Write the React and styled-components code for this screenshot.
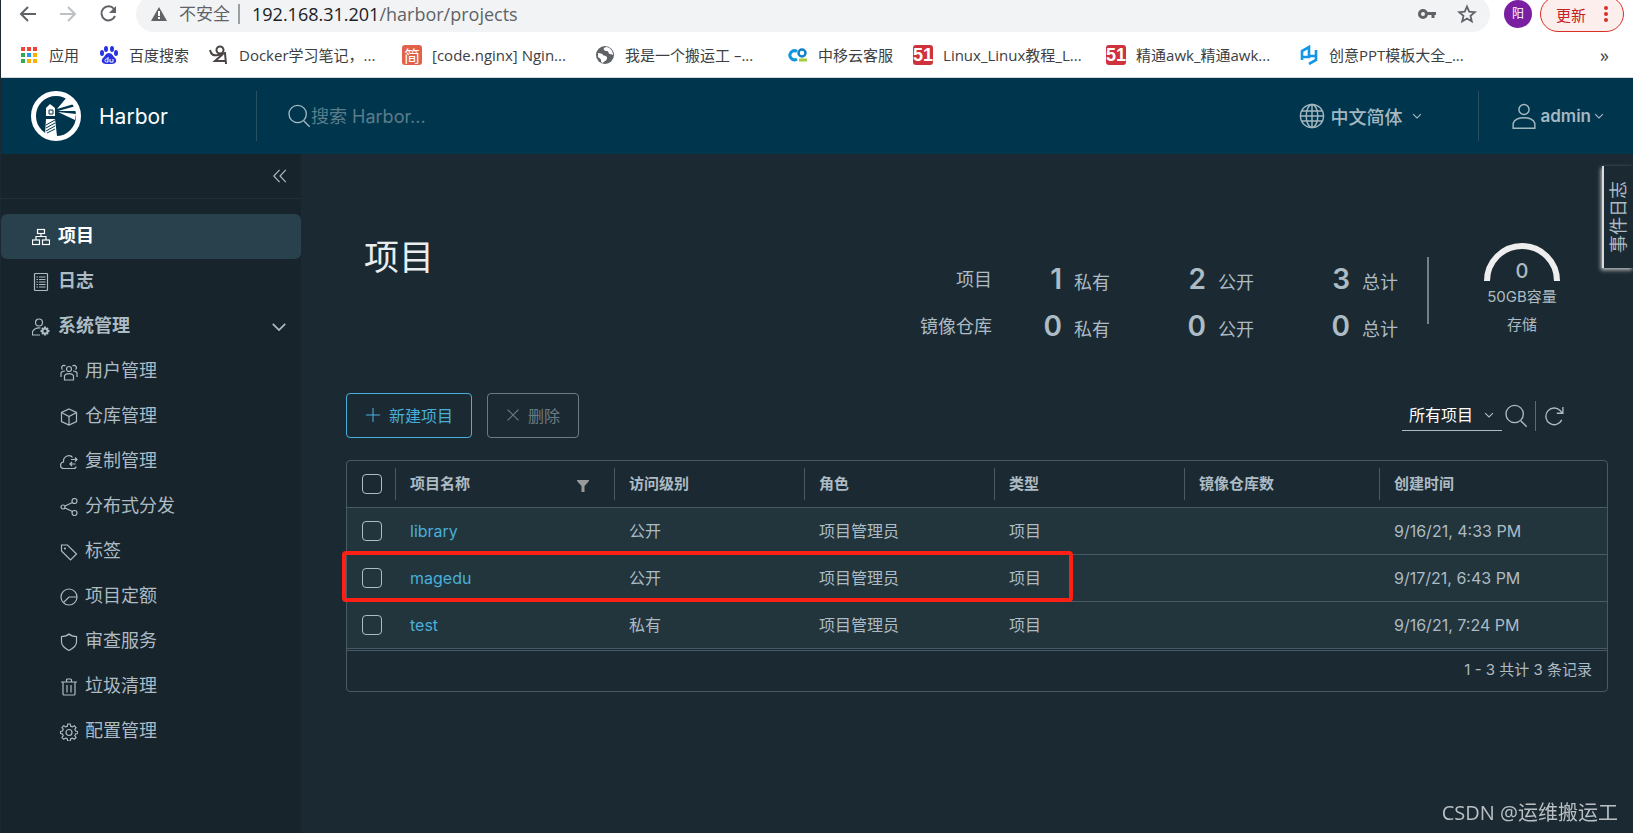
import React, { useState } from 'react';
import styled, { createGlobalStyle } from 'styled-components';

const navItems = [
  { icon: 'users', label: '用户管理' },
  { icon: 'cube', label: '仓库管理' },
  { icon: 'cloud', label: '复制管理' },
  { icon: 'share', label: '分布式分发' },
  { icon: 'tag', label: '标签' },
  { icon: 'pie', label: '项目定额' },
  { icon: 'shield', label: '审查服务' },
  { icon: 'trash', label: '垃圾清理' },
  { icon: 'cog', label: '配置管理' }
];

const bookmarks = [
  { icon: 'apps', label: '应用' },
  { icon: 'baidu', label: '百度搜索' },
  { icon: 'figure', label: 'Docker学习笔记，...', wide: true },
  { icon: 'jian', label: '[code.nginx] Ngin...', wide: true },
  { icon: 'globe', label: '我是一个搬运工 –...', wide: true },
  { icon: 'co', label: '中移云客服' },
  { icon: 'five', label: 'Linux_Linux教程_L...', wide: true },
  { icon: 'five', label: '精通awk_精通awk...', wide: true },
  { icon: 'ppt', label: '创意PPT模板大全_...', wide: true }
];

const stats = [
  { label: '项目', values: [1, 2, 3] },
  { label: '镜像仓库', values: [0, 0, 0] }
];
const statNames = ['私有', '公开', '总计'];

const projects = [
  { name: 'library', access: '公开', role: '项目管理员', type: '项目', created: '9/16/21, 4:33 PM' },
  { name: 'magedu', access: '公开', role: '项目管理员', type: '项目', created: '9/17/21, 6:43 PM' },
  { name: 'test', access: '私有', role: '项目管理员', type: '项目', created: '9/16/21, 7:24 PM' }
];

const gearPath =
  'M15.5 2h5l1 4.4 3.2 1.4 3.9-2.4 3.5 3.6-2.4 3.8 1.4 3.2 4.4 1v4l-4.4 1-1.4 3.2 2.4 3.9-3.6 3.5-3.8-2.4-3.2 1.4-1 4.4h-5l-1-4.4-3.2-1.4-3.8 2.4-3.5-3.5 2.4-3.9L5 22l-4-1v-4l4-1 1.4-3.2L4 9l3.5-3.6 3.8 2.4 3.2-1.4z';

// line icons on a 36 unit grid
const lineIcons = {
  org: (
    <>
      <rect x="11" y="3" width="14" height="8" />
      <rect x="1" y="24" width="14" height="9" />
      <rect x="21" y="24" width="14" height="9" />
      <path d="M18 11v6M8 24v-7h20v7" />
    </>
  ),
  log: (
    <>
      <rect x="5" y="1" width="26" height="34" rx="2" />
      <path d="M9 8h3M14 8h13M9 13h3M14 13h13M9 18h3M14 18h13M9 23h3M14 23h13M9 28h3M14 28h13" />
    </>
  ),
  admin: (
    <>
      <circle cx="14" cy="9" r="7" />
      <path d="M16 34H1v-7c4-6 9-8 16-7" />
      <circle cx="26" cy="26" r="5" strokeWidth="4" />
      <path d="M26 17v3M26 32v3M17 26h3M32 26h3M20 20l2 2M30 30l2 2M32 20l-2 2M22 30l-2 2" strokeWidth="4" />
    </>
  ),
  users: (
    <>
      <circle cx="18" cy="12" r="5" />
      <path d="M9 34V25c3-5 15-5 18 0v9zM5 13a4.5 4.5 0 1 1 6-7M31 13a4.5 4.5 0 1 0-6-7M2 28v-8c1-3 4-4 8-4M34 28v-8c-1-3-4-4-8-4" />
    </>
  ),
  cube: <path d="M18 2l15 7v18l-15 7-15-7V9zM3 9l15 8 15-8M18 17v17" />,
  cloud: (
    <path d="M32 27c0 3-2 4-5 4H8c-9 0-9-12-1-13C6 5 21 2 25 9M22 13h12M30 9l4 4-4 4M31 22H20M24 18l-4 4 4 4" />
  ),
  share: (
    <>
      <circle cx="6" cy="18" r="4" />
      <circle cx="29" cy="6" r="5" />
      <circle cx="29" cy="30" r="5" />
      <path d="M10 16l15-7M10 20l15 7" />
    </>
  ),
  tag: (
    <>
      <path d="M3 4h12l18 18-12 12L3 16z" />
      <circle cx="10" cy="11" r="1" />
    </>
  ),
  pie: (
    <>
      <circle cx="18" cy="18" r="16" />
      <path d="M34 18H18L7 29" />
    </>
  ),
  shield: <path d="M18 2c4 4 9 5 15 5v11c0 8-7 13-15 17C10 31 3 26 3 18V7c6 0 11-1 15-5z" />,
  trash: (
    <>
      <path d="M2 8h32M6 8v24q0 2 2 2h20q2 0 2-2V8M13 8V4q0-2 2-2h6q2 0 2 2v4M14 14v15M22 14v15" />
    </>
  ),
  cog: (
    <>
      <path d={gearPath} />
      <circle cx="18" cy="19" r="6" />
    </>
  ),
  search: (
    <>
      <circle cx="16" cy="15" r="13" />
      <path d="M25 25l9 9" />
    </>
  ),
  world: (
    <>
      <circle cx="18" cy="18" r="16" />
      <ellipse cx="18" cy="18" rx="8" ry="16" />
      <path d="M18 2v32M4 11h28M2 18h32M4 25h28" />
    </>
  ),
  user: (
    <>
      <circle cx="18" cy="9" r="7" />
      <path d="M3 35V28c4-10 26-10 30 0v7z" />
    </>
  ),
  down: <path d="M4 11l14 14 14-14" />,
  collapse: <path d="M17 2L2 18l15 16M33 2L18 18l15 16" />,
  plus: <path d="M18 2v32M2 18h32" />,
  close: <path d="M4 4l28 28M32 4L4 32" />,
  refresh: <path d="M32 25A15 15 0 1 1 29 8l4 5M34 2v11H23" />
};

function LineIcon({ name, size = 18, weight = 2.4 }) {
  return (
    <Svg width={size} height={size} viewBox="0 0 36 36" fill="none" stroke="currentColor" strokeWidth={weight} aria-hidden="true">
      {lineIcons[name]}
    </Svg>
  );
}

function BookmarkIcon({ name }) {
  if (name === 'jian') return <Badge $bg="#e2614b" $size={16}>简</Badge>;
  if (name === 'five') return <Badge $bg="#cf313d" $size={18} $bold>51</Badge>;
  return (
    <Svg width="20" height="20" viewBox="0 0 20 20" aria-hidden="true">
      {name === 'apps' &&
        ['#f44336', '#f44336', '#f44336', '#34a853', '#2196f3', '#fbb000', '#34a853', '#fbb000', '#fbb000'].map((c, i) => (
          <rect key={i} x={2 + (i % 3) * 6} y={2 + Math.floor(i / 3) * 6} width="4" height="4" fill={c} />
        ))}
      {name === 'baidu' && (
        <g fill="#2932e1">
          <ellipse cx="7" cy="4" rx="2" ry="3" />
          <ellipse cx="13" cy="4" rx="2" ry="3" />
          <ellipse cx="3" cy="8" rx="2" ry="3" />
          <ellipse cx="17" cy="8" rx="2" ry="3" />
          <path d="M10 8c3 0 4 3 6 5 3 3 0 6-3 6H7c-3 0-6-3-3-6 2-2 3-5 6-5z" />
          <path d="M9 12v5H7.5q-1.5 0-1.5-1.5T7.5 14H9M11 14v3h3v-3" fill="none" stroke="#fff" />
        </g>
      )}
      {name === 'figure' && (
        <g fill="none" stroke="#4a4543" strokeWidth="2">
          <circle cx="11" cy="5" r="3.5" />
          <path d="M1 5c1 5 4 6 8 5l7-2 1 11M17 16H6l8-7" />
        </g>
      )}
      {name === 'globe' && (
        <g>
          <circle cx="10" cy="10" r="9" fill="#5f6368" />
          <path d="M3 8c3 0 5 1 5 2s4 0 4 3-3 3-4 5l-2-1c1-3-2-4-3-5zM9 3c-1 3 1 3 3 3s1 3 3 3 2 1 3 1c0-4-3-8-7-8z" fill="#fff" />
        </g>
      )}
      {name === 'co' && (
        <g fill="none">
          <path d="M9 6.5A4.5 4.5 0 1 0 9 14" stroke="#1296db" strokeWidth="3" />
          <circle cx="14" cy="8" r="3.5" stroke="#1480c8" strokeWidth="2.5" />
          <path d="M11 15h8" stroke="#a4ce39" strokeWidth="3" />
        </g>
      )}
      {name === 'ppt' && (
        <path d="M3 15V6l7-4v10H3M10 11h7M17 5v10l-7 4" fill="none" stroke="#1296e6" strokeWidth="2.6" />
      )}
    </Svg>
  );
}

function BrowserBar() {
  return (
    <Browser>
      <Toolbar>
        <ToolButton aria-label="后退">
          <Svg width="20" height="20" viewBox="0 0 20 20" fill="none" stroke="#5f6368" strokeWidth="2">
            <path d="M18 10H4M10 3l-7 7 7 7" />
          </Svg>
        </ToolButton>
        <ToolButton aria-label="前进">
          <Svg width="20" height="20" viewBox="0 0 20 20" fill="none" stroke="#bdc1c6" strokeWidth="2">
            <path d="M2 10h14M10 3l7 7-7 7" />
          </Svg>
        </ToolButton>
        <ToolButton aria-label="重新加载">
          <Svg width="20" height="20" viewBox="0 0 20 20" fill="none" stroke="#5f6368" strokeWidth="2">
            <path d="M16 5a7 7 0 1 0 1 7" />
            <path d="M18 2v7h-7z" fill="#5f6368" stroke="none" />
          </Svg>
        </ToolButton>
        <Omnibox>
          <Svg width="16" height="16" viewBox="0 0 16 16">
            <path d="M8 1l8 14H0z" fill="#5f6368" />
            <path d="M8 5v5M8 11v2" stroke="#fff" strokeWidth="2" />
          </Svg>
          <Unsafe>不安全</Unsafe>
          <Address>
            <b>192.168.31.201</b>/harbor/projects
          </Address>
          <Svg width="20" height="20" viewBox="0 0 20 20" fill="none" stroke="#5f6368" strokeWidth="3">
            <circle cx="6" cy="10" r="3.5" />
            <path d="M9 9.5h10M16 10v4" />
          </Svg>
          <Svg width="20" height="20" viewBox="0 0 20 20" fill="none" stroke="#5f6368" strokeWidth="1.8">
            <path d="M10 2.500l2.200 5.200 5.600.500-4.300 3.700 1.300 5.500-4.800-2.900-4.800 2.900 1.300-5.500L2.200 8.200l5.600-.500z" />
          </Svg>
        </Omnibox>
        <Avatar>阳</Avatar>
        <UpdateButton>
          更新
          <Svg width="4" height="18" viewBox="0 0 4 18" fill="#d93025">
            <circle cx="2" cy="3" r="2" />
            <circle cx="2" cy="9" r="2" />
            <circle cx="2" cy="15" r="2" />
          </Svg>
        </UpdateButton>
      </Toolbar>
      <Bookmarks>
        {bookmarks.map((item) => (
          <Bookmark key={item.label} href="#" $wide={item.wide}>
            <BookmarkIcon name={item.icon} />
            {item.label}
          </Bookmark>
        ))}
        <More aria-label="更多书签">»</More>
      </Bookmarks>
    </Browser>
  );
}

function HarborHeader() {
  return (
    <Header>
      <Brand href="#">
        <Svg width="50" height="50" viewBox="0 0 50 50">
          <circle cx="25" cy="25" r="22.5" fill="none" stroke="#fff" strokeWidth="5" />
          <path d="M19 13l5 4v8h-9v-8zM15 28h9l2 17-6 3-6-4z" fill="#fff" />
          <path d="M18 19h4v4h-4zM15 34l9-5M15 37l9-5M15 40l9-5M16 42l8-4" fill="none" stroke="#00364d" />
          <path d="M26 18l10-12 7 7zM27 20l18-5 1 5zM27 21l18 2-1 6z" fill="#fff" />
        </Svg>
        Harbor
      </Brand>
      <Search>
        <LineIcon name="search" size={24} weight={2} />
        <SearchInput type="search" placeholder="搜索 Harbor..." aria-label="搜索 Harbor" />
      </Search>
      <HeaderButton>
        <LineIcon name="world" size={26} weight={2} />
        中文简体
        <Caret>
          <LineIcon name="down" size={10} weight={4} />
        </Caret>
      </HeaderButton>
      <UserButton>
        <LineIcon name="user" size={26} weight={2} />
        admin
        <LineIcon name="down" size={10} weight={4} />
      </UserButton>
    </Header>
  );
}

function Sidebar() {
  const [open, setOpen] = useState(true);

  return (
    <Side>
      <CollapseRow>
        <PlainButton aria-label="收起">
          <LineIcon name="collapse" size={14} weight={3} />
        </PlainButton>
      </CollapseRow>
      <NavLink href="#" $active>
        <LineIcon name="org" />
        项目
      </NavLink>
      <NavLink href="#">
        <LineIcon name="log" />
        日志
      </NavLink>
      <NavGroup onClick={() => setOpen(!open)} aria-expanded={open}>
        <LineIcon name="admin" />
        系统管理
        <GroupCaret>
          <LineIcon name="down" size={16} weight={4} />
        </GroupCaret>
      </NavGroup>
      {open &&
        navItems.map((item) => (
          <SubLink key={item.label} href="#">
            <LineIcon name={item.icon} />
            {item.label}
          </SubLink>
        ))}
    </Side>
  );
}

function Summary() {
  return (
    <Head>
      <PageName>项目</PageName>
      <StatGrid>
        {stats.map((row) => (
          <React.Fragment key={row.label}>
            <StatCell>{row.label}</StatCell>
            {row.values.map((value, i) => (
              <StatCell key={statNames[i]}>
                <StatNumber>{value}</StatNumber>
                {statNames[i]}
              </StatCell>
            ))}
          </React.Fragment>
        ))}
      </StatGrid>
      <Divider />
      <Storage>
        <Gauge>
          <Svg width="76" height="38" viewBox="0 0 76 38">
            <path d="M3 38a35 35 0 0 1 70 0" fill="none" stroke="#eee" strokeWidth="6" />
          </Svg>
          <GaugeValue>0</GaugeValue>
        </Gauge>
        <span>50GB容量</span>
        <span>存储</span>
      </Storage>
    </Head>
  );
}

function ProjectTable() {
  return (
    <Grid>
      <Table>
        <colgroup>
          <Col $w={48} />
          <Col $w={219} />
          <Col $w={190} />
          <Col $w={190} />
          <Col $w={190} />
          <Col $w={195} />
          <col />
        </colgroup>
        <thead>
          <tr>
            <Th>
              <Checkbox type="checkbox" aria-label="全选" />
            </Th>
            <Th>
              <HeadCell>
                项目名称
                <FilterButton aria-label="过滤">
                  <Svg width="12" height="12" viewBox="0 0 12 12">
                    <path d="M0 0h12v1L7.5 6v6h-3V6L0 1z" fill="#9a9a9a" />
                  </Svg>
                </FilterButton>
              </HeadCell>
            </Th>
            {['访问级别', '角色', '类型', '镜像仓库数', '创建时间'].map((name) => (
              <Th key={name}>
                <HeadCell>{name}</HeadCell>
              </Th>
            ))}
          </tr>
        </thead>
        <tbody>
          {projects.map((p) => (
            <tr key={p.name}>
              <Td>
                <Checkbox type="checkbox" aria-label={p.name} />
              </Td>
              <Td>
                <ProjectLink href="#">{p.name}</ProjectLink>
              </Td>
              <Td>{p.access}</Td>
              <Td>{p.role}</Td>
              <Td>{p.type}</Td>
              <Td />
              <Td>{p.created}</Td>
            </tr>
          ))}
        </tbody>
      </Table>
      <GridFooter>1 - 3 共计 3 条记录</GridFooter>
      <Highlight />
    </Grid>
  );
}

function App() {
  return (
    <Page>
      <GlobalStyle />
      <BrowserBar />
      <HarborHeader />
      <Body>
        <Sidebar />
        <Main>
          <Summary />
          <Actions>
            <ActionButton>
              <LineIcon name="plus" size={16} />
              新建项目
            </ActionButton>
            <ActionButton disabled>
              <LineIcon name="close" size={14} weight={3} />
              删除
            </ActionButton>
            <Filters>
              <SelectBox>
                <Select aria-label="项目类型" defaultValue="all">
                  <option value="all">所有项目</option>
                </Select>
                <LineIcon name="down" size={10} weight={4} />
              </SelectBox>
              <PlainButton aria-label="搜索">
                <LineIcon name="search" size={24} weight={2} />
              </PlainButton>
              <RefreshButton aria-label="刷新">
                <LineIcon name="refresh" size={20} />
              </RefreshButton>
            </Filters>
          </Actions>
          <ProjectTable />
          <EventTab>事件日志</EventTab>
        </Main>
      </Body>
      <Watermark>CSDN @运维搬运工</Watermark>
    </Page>
  );
}

export default App;

const GlobalStyle = createGlobalStyle`
  * {
    box-sizing: border-box;
  }
  body {
    margin: 0;
    background-color: #1b2a32;
  }
  button, input, select {
    font: inherit;
    color: inherit;
  }
`;

const Svg = styled.svg`
  display: block;
  flex: none;
`;

const Page = styled.div`
  display: flex;
  flex-direction: column;
  min-height: 100vh;
  border-left: 1px solid #1b2a32;
  font-family: Inter, 'Noto Sans CJK SC', sans-serif;
  font-size: 16px;
  color: #adbbc4;
`;

const Browser = styled.div`
  background-color: #ffffff;
  border-bottom: 1px solid #d5d9dd;
  font-family: 'Open Sans', 'Noto Sans CJK SC', sans-serif;
  color: #3c4043;
`;

const Toolbar = styled.div`
  display: flex;
  align-items: flex-end;
  height: 32px;
  padding: 0 9px 0 17px;
  overflow: hidden;
`;

const PlainButton = styled.button`
  display: flex;
  align-items: center;
  padding: 0;
  border: none;
  background: none;
  cursor: pointer;
`;

const ToolButton = styled(PlainButton)`
  width: 20px;
  height: 36px;
  margin-right: 20px;
`;

const Omnibox = styled.div`
  flex: 1;
  display: flex;
  align-items: center;
  height: 36px;
  margin-left: -2px;
  padding: 0 13px 0 15px;
  border-radius: 18px;
  background-color: #f1f3f4;
  font-size: 18px;
  line-height: 20px;
  color: #5f6368;

  svg:last-child {
    margin-left: 20px;
  }
`;

const Unsafe = styled.span`
  margin-left: 12px;
  padding-right: 8px;
  border-right: 2px solid #9aa0a6;
  font-size: 17px;
`;

const Address = styled.span`
  flex: 1;
  margin-left: 12px;

  b {
    font-weight: 400;
    color: #202124;
  }
`;

const Avatar = styled.span`
  width: 28px;
  height: 28px;
  margin: 0 8px 4px 14px;
  border-radius: 50%;
  background-color: #7b1fa2;
  color: #ffffff;
  font-size: 12px;
  line-height: 28px;
  text-align: center;
`;

const UpdateButton = styled.button`
  display: flex;
  align-items: center;
  justify-content: space-between;
  width: 84px;
  height: 36px;
  padding: 0 15px;
  border: 1px solid #d93025;
  border-radius: 18px;
  background-color: #fceeed;
  color: #c5221f;
  font-size: 15px;
`;

const Bookmarks = styled.nav`
  display: flex;
  align-items: center;
  height: 45px;
  padding: 0 24px 0 8px;
  overflow: hidden;
`;

const Bookmark = styled.a`
  display: flex;
  flex: none;
  align-items: center;
  gap: 10px;
  width: ${(props) => (props.$wide ? '193px' : 'auto')};
  padding: 0 10px;
  color: #3c4043;
  font-size: 15px;
  line-height: 20px;
  white-space: nowrap;
  text-decoration: none;
`;

const Badge = styled.span`
  width: 20px;
  height: 20px;
  border-radius: 3px;
  background-color: ${(props) => props.$bg};
  color: #ffffff;
  font-family: ${(props) => (props.$bold ? "'Liberation Sans Narrow', 'Liberation Sans'" : "'Noto Sans CJK SC'")}, sans-serif;
  font-size: ${(props) => props.$size}px;
  font-weight: ${(props) => (props.$bold ? 700 : 400)};
  line-height: 20px;
  text-align: center;
`;

const More = styled(PlainButton)`
  margin-left: auto;
  color: #3c4043;
  font-size: 18px;
  line-height: 20px;
`;

const Header = styled.header`
  display: flex;
  align-items: center;
  height: 76px;
  background-color: #00364d;
`;

const Brand = styled.a`
  display: flex;
  align-items: center;
  gap: 18px;
  width: 256px;
  height: 50px;
  padding-left: 30px;
  border-right: 1px solid #26505f;
  color: #ffffff;
  font-size: 21px;
  text-decoration: none;
`;

const Search = styled.label`
  flex: 1;
  display: flex;
  align-items: center;
  padding-left: 30px;
  color: #a5b8c1;
`;

const SearchInput = styled.input`
  flex: 1;
  padding: 0;
  border: none;
  outline: none;
  background: none;
  font-size: 18px;

  &::placeholder {
    color: #5b7c8a;
  }
`;

const HeaderButton = styled(PlainButton)`
  gap: 5px;
  padding-bottom: 1px;
  color: #a5b8c1;
  font-size: 18px;
  font-weight: 500;
`;

const Caret = styled.span`
  margin-left: 5px;
`;

const UserButton = styled(PlainButton)`
  gap: 3px;
  height: 50px;
  margin-left: 56px;
  padding: 0 29px 0 32px;
  border-left: 1px solid #26505f;
  color: #a5b8c1;
  font-size: 17px;
  font-weight: 600;
`;

const Body = styled.div`
  flex: 1;
  display: flex;
`;

const Side = styled.nav`
  flex: none;
  width: 300px;
  background-color: #17242b;
`;

const CollapseRow = styled.div`
  display: flex;
  align-items: center;
  justify-content: flex-end;
  height: 45px;
  margin-bottom: 15px;
  padding-right: 14px;
  border-bottom: 1px solid #222f33;
`;

const NavLink = styled.a`
  display: flex;
  align-items: center;
  gap: 8px;
  height: 45px;
  padding: 0 0 2px 31px;
  border-radius: 6px;
  background-color: ${(props) => (props.$active ? '#29404d' : 'transparent')};
  color: ${(props) => (props.$active ? '#ffffff' : '#adbbc4')};
  font-size: 18px;
  font-weight: 700;
  line-height: 24px;
  text-decoration: none;

  svg {
    margin-top: 2px;
  }
`;

const NavGroup = styled(PlainButton)`
  gap: 8px;
  width: 100%;
  height: 45px;
  padding: 0 14px 2px 31px;
  font-size: 18px;
  font-weight: 700;
  line-height: 24px;

  svg {
    margin-top: 2px;
  }
`;

const GroupCaret = styled.span`
  margin-left: auto;
`;

const SubLink = styled(NavLink)`
  gap: 7px;
  padding-left: 59px;
  font-weight: 400;
`;

const Main = styled.main`
  position: relative;
  flex: 1;
  min-width: 0;
  padding: 82px 25px 100px 45px;
`;

const Head = styled.div`
  display: flex;
  align-items: flex-start;
  padding: 0 48px 0 18px;
`;

const PageName = styled.h1`
  flex: 1;
  margin: 0;
  color: #eaedf0;
  font-size: 35px;
  font-weight: 400;
  line-height: 42px;
`;

const StatGrid = styled.div`
  display: grid;
  grid-template-columns: 72px 118px 144px 144px;
  margin-top: 20px;
  font-size: 18px;
  line-height: 47px;
`;

const StatCell = styled.div`
  display: flex;
  align-items: baseline;
  justify-content: flex-end;
  gap: 12px;
  height: 47px;
`;

const StatNumber = styled.span`
  font-size: 28px;
  font-weight: 600;
`;

const Divider = styled.div`
  width: 2px;
  height: 67px;
  margin: 21px 55px 0 29px;
  background-color: #72808a;
`;

const Storage = styled.div`
  display: flex;
  flex-direction: column;
  align-items: center;
  margin-top: 7px;
  font-size: 15px;
  line-height: 28px;
`;

const Gauge = styled.div`
  position: relative;
  margin-bottom: 2px;
`;

const GaugeValue = styled.span`
  position: absolute;
  right: 0;
  bottom: 0;
  left: 0;
  font-size: 20px;
  font-weight: 500;
  line-height: 20px;
  text-align: center;
`;

const Actions = styled.div`
  display: flex;
  align-items: center;
  gap: 15px;
  margin: 43px 0 22px;
`;

const ActionButton = styled.button`
  display: flex;
  align-items: center;
  gap: 8px;
  height: 45px;
  padding: 0 18px 2px;
  border: 1px solid #49afd9;
  border-radius: 4px;
  background: none;
  color: #49afd9;
  font-size: 16px;

  &:disabled {
    border-color: #6d7a82;
    color: #6d7a82;
  }
`;

const Filters = styled.div`
  display: flex;
  align-items: center;
  gap: 2px;
  margin-left: auto;
  padding-right: 44px;
`;

const SelectBox = styled.div`
  display: flex;
  align-items: center;
  width: 100px;
  height: 30px;
  padding: 0 8px 0 7px;
  border-bottom: 1px solid #adbbc4;
`;

const Select = styled.select`
  flex: 1;
  padding: 0;
  border: none;
  outline: none;
  appearance: none;
  background: none;
  color: #ffffff;
  font-size: 16px;
`;

const RefreshButton = styled(PlainButton)`
  height: 30px;
  margin-left: 5px;
  padding-left: 8px;
  border-left: 1px solid #5c6b75;
`;

const Grid = styled.div`
  position: relative;
  border: 1px solid #495a67;
  border-radius: 4px;
`;

const Table = styled.table`
  width: 100%;
  table-layout: fixed;
  border-spacing: 0;
`;

const Col = styled.col`
  width: ${(props) => props.$w}px;
`;

const Th = styled.th`
  height: 47px;
  padding: 0;
  border-bottom: 1px solid #495a67;
  font-size: 15px;
  font-weight: 700;
  text-align: left;
`;

const HeadCell = styled.div`
  display: flex;
  align-items: center;
  justify-content: space-between;
  height: 32px;
  padding: 0 25px 4px 14px;
  border-left: 1px solid #495a67;
`;

const FilterButton = styled(PlainButton)`
  padding-top: 8px;
`;

const Td = styled.td`
  height: 47px;
  padding: 0 0 1px 15px;
  border-bottom: 1px solid #495a67;
  background-color: #22343c;
  font-size: 16px;
  line-height: 24px;

  &:first-child {
    padding: 0;
  }
`;

const Checkbox = styled.input`
  display: block;
  appearance: none;
  width: 20px;
  height: 20px;
  margin: 0 0 0 15px;
  border: 1px solid #adbbc4;
  border-radius: 4px;
`;

const ProjectLink = styled.a`
  color: #49afd9;
  text-decoration: none;
`;

const GridFooter = styled.div`
  height: 41px;
  margin-top: 1px;
  padding-right: 15px;
  border-top: 1px solid #495a67;
  font-size: 15px;
  line-height: 38px;
  text-align: right;
`;

// red frame around the magedu row
const Highlight = styled.div`
  position: absolute;
  top: 90px;
  left: -5px;
  width: 58%;
  height: 51px;
  border: 4px solid #ff2015;
  border-radius: 4px;
  pointer-events: none;
`;

const EventTab = styled.button`
  position: absolute;
  top: 12px;
  right: 0;
  width: 31px;
  height: 102px;
  padding: 0 3px;
  border: solid #d8dcdf;
  border-width: 0 2px 0 0;
  box-shadow: 1px -2px 4px #c0c0c0;
  background-color: #1b2a32;
  font-size: 18px;
  line-height: 20px;
  writing-mode: vertical-rl;
  text-orientation: sideways;
  transform: rotate(180deg);
`;

const Watermark = styled.div`
  position: fixed;
  right: 15px;
  bottom: 6px;
  color: #b9bfc3;
  font-family: 'Open Sans', 'Noto Sans CJK SC', sans-serif;
  font-size: 20px;
  line-height: 28px;
`;
